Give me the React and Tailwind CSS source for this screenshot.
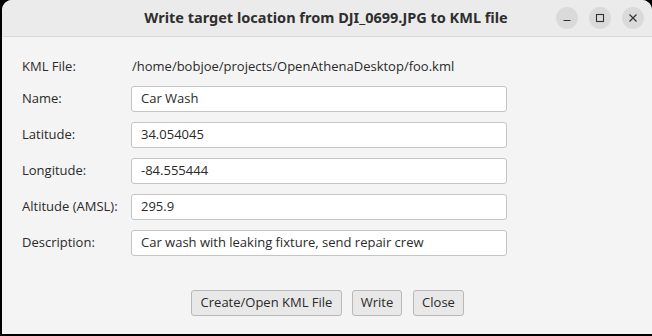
export default function App() {
  const rows = [
    ["Name:", "Car Wash"],
    ["Latitude:", "34.054045"],
    ["Longitude:", "-84.555444"],
    ["Altitude (AMSL):", "295.9"],
    ["Description:", "Car wash with leaking fixture, send repair crew"],
  ];
  const body = { fontFamily: '"Open Sans", "Noto Sans", sans-serif' };
  return (
    <div className="w-[652px] h-[336px] bg-black flex flex-col">
      <div className="ml-[2px] w-[650px] h-[334px] rounded-t-[10px] overflow-hidden flex flex-col bg-[#f4f4f4]">
        <div className="h-[37px] shrink-0 bg-[#ebebeb] border-b border-[#d9d9d9] relative flex items-center justify-center">
          <div
            className="text-[14.5px] font-bold text-[#2e2e2e] ml-[-2px]"
            style={{ fontFamily: '"Noto Sans", sans-serif' }}
          >
            Write target location from DJI_0699.JPG to KML file
          </div>
          <div className="absolute right-[8px] top-[7px] flex gap-[11px]">
            <div className="w-[22px] h-[22px] rounded-full bg-[#dadada] flex items-center justify-center">
              <svg width="10" height="10" viewBox="0 0 10 10"><path d="M1.5 7.5h7" stroke="#333" strokeWidth="1.2" /></svg>
            </div>
            <div className="w-[22px] h-[22px] rounded-full bg-[#dadada] flex items-center justify-center">
              <svg width="10" height="10" viewBox="0 0 10 10"><rect x="1.5" y="1.5" width="7" height="7" fill="none" stroke="#333" strokeWidth="1.1" /></svg>
            </div>
            <div className="w-[22px] h-[22px] rounded-full bg-[#dadada] flex items-center justify-center">
              <svg width="10" height="10" viewBox="0 0 10 10"><path d="M1.5 1.5l7 7M8.5 1.5l-7 7" stroke="#333" strokeWidth="1.2" /></svg>
            </div>
          </div>
        </div>
        <div className="flex-1 flex flex-col pl-[20px] text-[13px] text-[#2a2a2a]" style={body}>
          <div className="flex items-center h-[26px] mt-[17px]">
            <div className="w-[110px]">KML File:</div>
            <div>/home/bobjoe/projects/OpenAthenaDesktop/foo.kml</div>
          </div>
          {rows.map(([l, v], i) => (
            <div key={l} className={`flex items-center h-[26px] ${i === 0 ? "mt-[6px]" : "mt-[10px]"}`}>
              <div className="w-[109px]">{l}</div>
              <div className="w-[376px] h-[26px] bg-white border border-[#c4c4c4] rounded-[3px] flex items-center px-[9px]">
                {v}
              </div>
            </div>
          ))}
          <div className="flex gap-[10px] mt-[34px] ml-[169px]">
            <div className="w-[151px] h-[26px] flex items-center justify-center bg-[#e8e8e8] border border-[#b8b8b8] rounded-[3px]">
              Create/Open KML File
            </div>
            <div className="w-[50px] h-[26px] flex items-center justify-center bg-[#e8e8e8] border border-[#b8b8b8] rounded-[3px]">
              Write
            </div>
            <div className="w-[51px] ml-[1px] h-[26px] flex items-center justify-center bg-[#e8e8e8] border border-[#b8b8b8] rounded-[3px]">
              Close
            </div>
          </div>
        </div>
      </div>
    </div>
  );
}
